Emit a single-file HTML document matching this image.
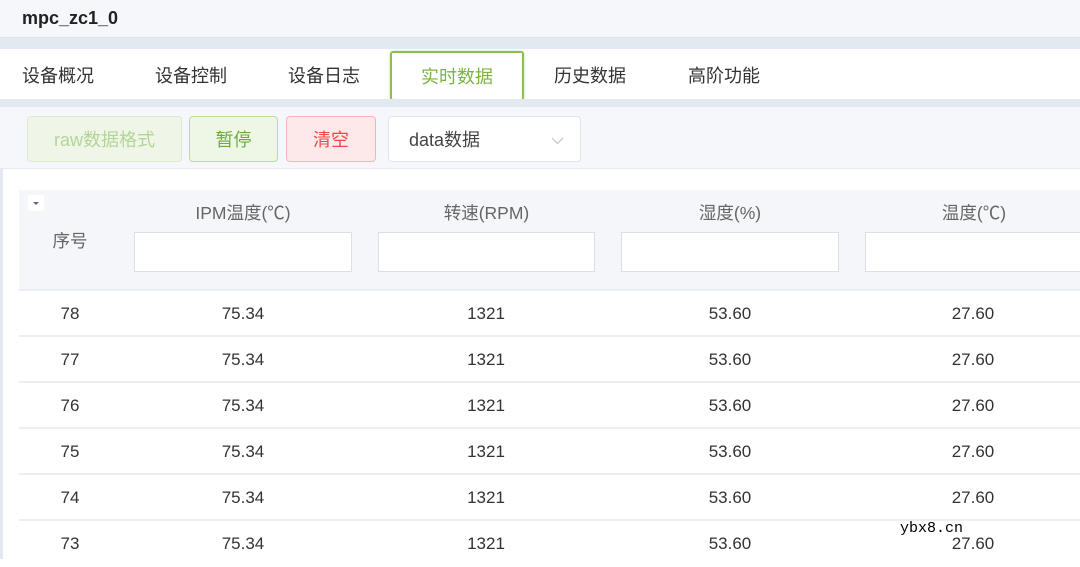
<!DOCTYPE html>
<html><head><meta charset="utf-8"><style>
*{margin:0;padding:0;box-sizing:border-box}
body{width:1080px;height:559px;overflow:hidden;background:#fff;font-family:"Liberation Sans","Noto Sans CJK SC",sans-serif;position:relative;color:#333}
.abs{position:absolute}
.hdr{left:0;top:0;width:1080px;height:38px;background:#f5f7fa;border-bottom:1px solid #dfe4ec}
.hdr span{position:absolute;left:22px;top:8px;font-size:18px;font-weight:bold;color:#222}
.band{left:0;width:1080px;background:#e4e9f1}
.tabs{left:0;top:49px;width:1080px;height:50px;background:#fff}
.tab{position:absolute;top:0;height:50px;line-height:54px;font-size:18px;color:#333}
.act{left:390px;top:51px;width:134px;height:50px;border:2px solid #8cc152;border-radius:3px;color:#7cb342;text-align:center;line-height:48px;font-size:18px;box-shadow:0 0 2px #b5d89a}
.tb{left:0;top:107px;width:1080px;height:62px;background:#f5f7fa;border-bottom:1px solid #e6e9ef}
.btn{position:absolute;top:116px;height:46px;border-radius:4px;text-align:center;line-height:46px;font-size:18px}
.th{left:19px;top:190px;width:1061px;height:101px;background:#f4f6fa;border-bottom:2px solid #ebeef3}
.inp{position:absolute;top:232px;height:40px;background:#fff;border:1px solid #dcdfe6}
.hl{position:absolute;top:200px;font-size:17.5px;color:#666;text-align:center}
.row{position:absolute;left:19px;width:1061px;height:46px;border-bottom:2px solid #ebeef3;font-size:17px;color:#333}
.row span{position:absolute;top:13px;text-align:center;width:120px}
</style></head><body>
<div class="abs" style="left:0;top:99px;width:3px;height:460px;background:#e4e9f1"></div>
<div class="abs hdr"><span>mpc_zc1_0</span></div>
<div class="abs band" style="top:38px;height:11px"></div>
<div class="abs tabs">
<div class="tab" style="left:22px">设备概况</div>
<div class="tab" style="left:155px">设备控制</div>
<div class="tab" style="left:288px">设备日志</div>
<div class="tab" style="left:554px">历史数据</div>
<div class="tab" style="left:688px">高阶功能</div>
</div>
<div class="abs act">实时数据</div>
<div class="abs band" style="top:99px;height:8px"></div>
<div class="abs tb"></div>
<div class="btn" style="left:27px;width:155px;background:#eff6e8;border:1px solid #dcebcd;color:#b3d597">raw数据格式</div>
<div class="btn" style="left:189px;width:89px;background:#eef6e6;border:1px solid #bcdc9f;color:#6eab3e">暂停</div>
<div class="btn" style="left:286px;width:90px;background:#fde9e9;border:1px solid #f8b4b4;color:#f04848">清空</div>
<div class="btn" style="left:388px;width:193px;background:#fff;border:1px solid #e1e5eb;color:#444;text-align:left;padding-left:20px">data数据<svg style="position:absolute;right:16px;top:20px" width="13" height="8" viewBox="0 0 13 8"><path d="M1 1l5.5 5.5L12 1" fill="none" stroke="#c0c4cc" stroke-width="1.2"/></svg></div>
<div class="abs th"></div>
<div class="abs" style="left:28px;top:195px;width:16px;height:16px;background:#fff;border-radius:2px"><svg width="16" height="16"><path d="M5 7h6l-3 3z" fill="#666"/></svg></div>
<div class="hl" style="left:30px;width:80px;top:228px">序号</div>
<div class="hl" style="left:134px;width:218px">IPM温度(℃)</div>
<div class="hl" style="left:378px;width:217px">转速(RPM)</div>
<div class="hl" style="left:621px;width:218px">湿度(%)</div>
<div class="hl" style="left:865px;width:218px">温度(℃)</div>
<div class="inp" style="left:134px;width:218px"></div>
<div class="inp" style="left:378px;width:217px"></div>
<div class="inp" style="left:621px;width:218px"></div>
<div class="inp" style="left:865px;width:220px"></div>
<div class="row" style="top:291px"><span style="left:-9px">78</span><span style="left:164px">75.34</span><span style="left:407px">1321</span><span style="left:651px">53.60</span><span style="left:894px">27.60</span></div>
<div class="row" style="top:337px"><span style="left:-9px">77</span><span style="left:164px">75.34</span><span style="left:407px">1321</span><span style="left:651px">53.60</span><span style="left:894px">27.60</span></div>
<div class="row" style="top:383px"><span style="left:-9px">76</span><span style="left:164px">75.34</span><span style="left:407px">1321</span><span style="left:651px">53.60</span><span style="left:894px">27.60</span></div>
<div class="row" style="top:429px"><span style="left:-9px">75</span><span style="left:164px">75.34</span><span style="left:407px">1321</span><span style="left:651px">53.60</span><span style="left:894px">27.60</span></div>
<div class="row" style="top:475px"><span style="left:-9px">74</span><span style="left:164px">75.34</span><span style="left:407px">1321</span><span style="left:651px">53.60</span><span style="left:894px">27.60</span></div>
<div class="row" style="top:521px;border:none"><span style="left:-9px">73</span><span style="left:164px">75.34</span><span style="left:407px">1321</span><span style="left:651px">53.60</span><span style="left:894px">27.60</span></div>
<div class="abs" style="left:900px;top:520px;font-family:'Liberation Mono',monospace;font-size:15px;color:#000">ybx8.cn</div>
</body></html>
